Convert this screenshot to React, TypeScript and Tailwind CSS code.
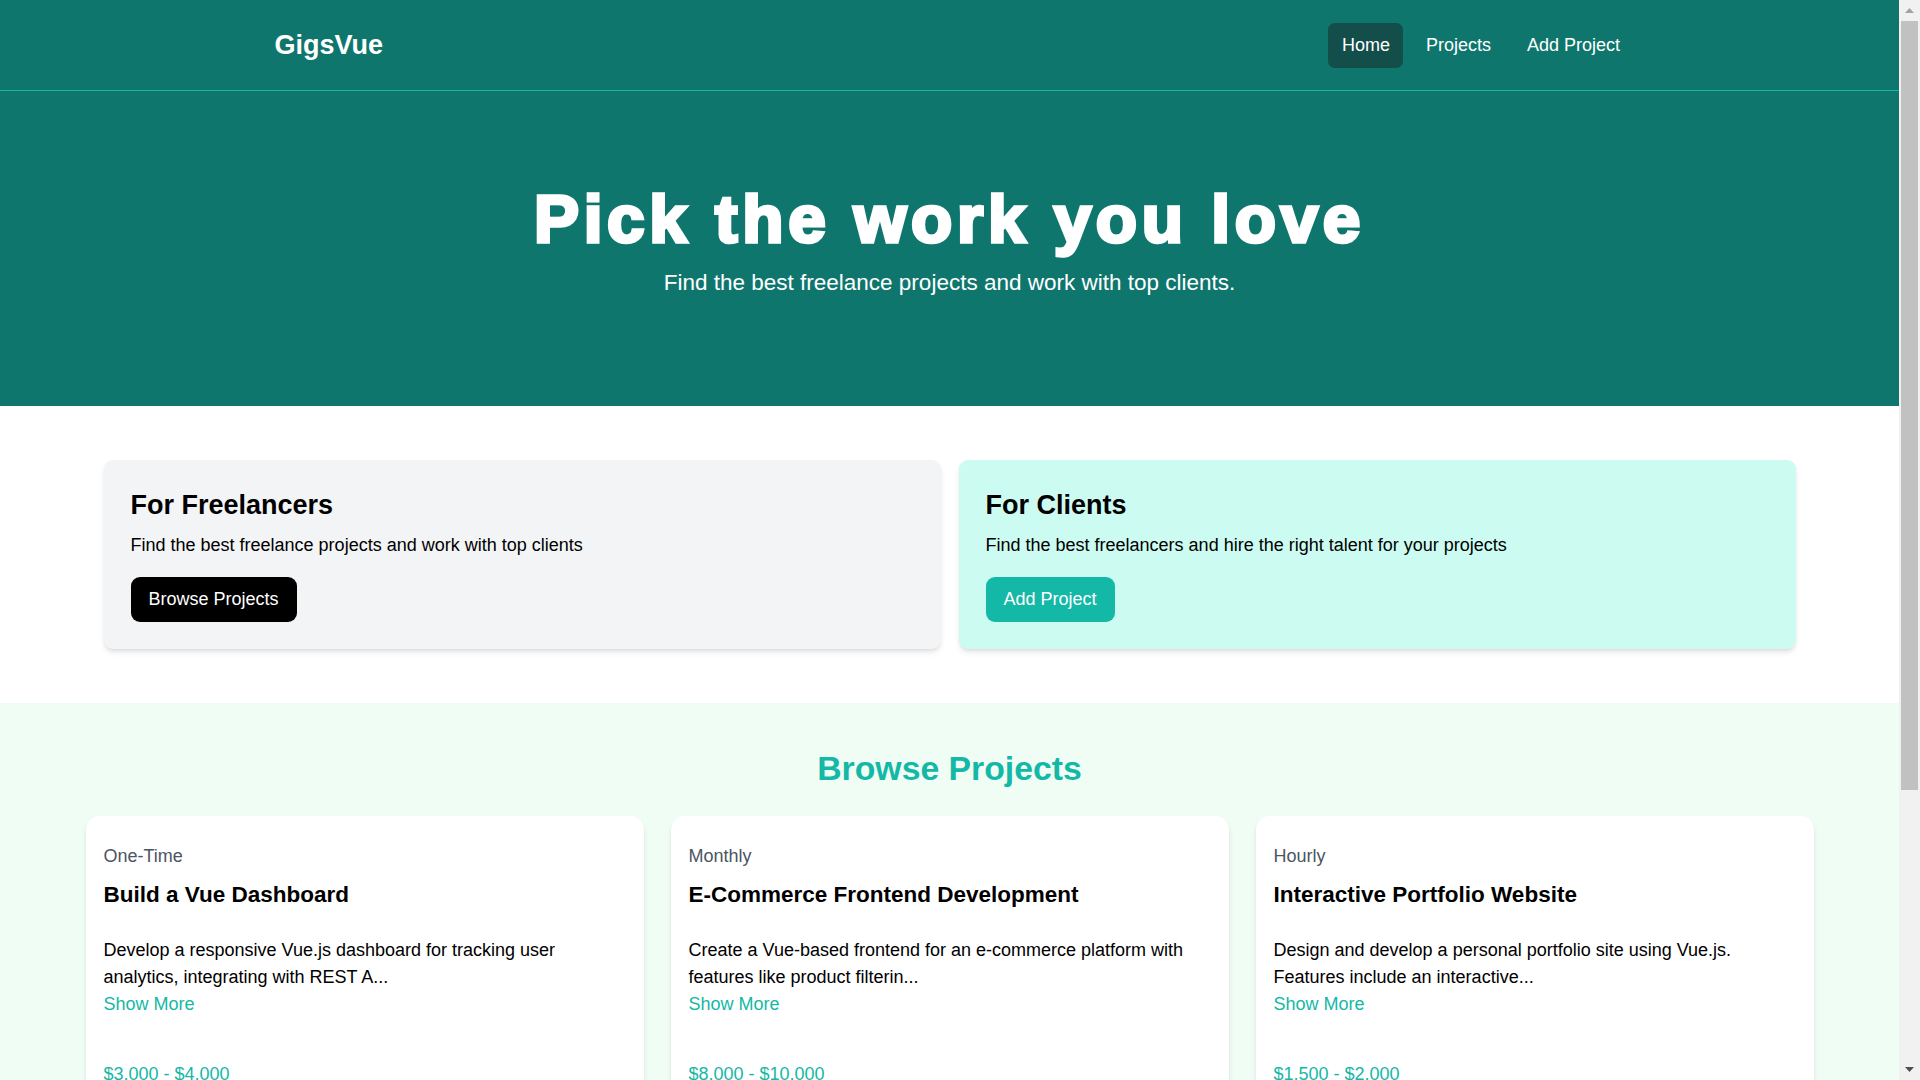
import { MapPin } from "lucide-react";

const projects = [
  {
    type: "One-Time",
    title: "Build a Vue Dashboard",
    description:
      "Develop a responsive Vue.js dashboard for tracking user analytics, integrating with REST A...",
    budget: "$3,000 - $4,000",
    location: "Remote",
  },
  {
    type: "Monthly",
    title: "E-Commerce Frontend Development",
    description:
      "Create a Vue-based frontend for an e-commerce platform with features like product filterin...",
    budget: "$8,000 - $10,000",
    location: "New York, NY",
  },
  {
    type: "Hourly",
    title: "Interactive Portfolio Website",
    description:
      "Design and develop a personal portfolio site using Vue.js. Features include an interactive...",
    budget: "$1,500 - $2,000",
    location: "Remote",
  },
];

function Navbar() {
  return (
    <nav className="bg-[#0f766e] border-b border-[#14b8a6]">
      <div className="max-w-[1440px] mx-auto px-[36px]">
        <div className="flex h-[90px] items-center justify-between">
          <a href="#" className="ml-[9px] text-white text-[27px] font-bold">
            GigsVue
          </a>
          <div className="flex gap-[9px]">
            <a href="#" className="text-white bg-[#134e4a] rounded-[6.75px] px-[13.5px] py-[9px] leading-[27px]">
              Home
            </a>
            <a href="#" className="text-white rounded-[6.75px] px-[13.5px] py-[9px] leading-[27px]">
              Projects
            </a>
            <a href="#" className="text-white rounded-[6.75px] px-[13.5px] py-[9px] leading-[27px]">
              Add Project
            </a>
          </div>
        </div>
      </div>
    </nav>
  );
}

function Hero() {
  return (
    <section className="bg-[#0f766e] py-[90px]">
      <div className="flex flex-col items-center text-center text-white">
        <h1 className="pt-[3.5px] text-[67.5px] leading-none font-bold tracking-[4.7px] [-webkit-text-stroke:3.5px_white]">
          Pick the work you love
        </h1>
        <p className="mt-[14.5px] mb-[18px] text-[22.5px] leading-[31.5px]">
          Find the best freelance projects and work with top clients.
        </p>
      </div>
    </section>
  );
}

function HomeCards() {
  return (
    <section className="py-[36px]">
      <div className="max-w-[1728px] mx-auto">
        <div className="grid grid-cols-2 gap-[18px] p-[18px]">
          <div className="bg-[#f3f4f6] p-[27px] rounded-[9px] shadow-md">
            <h2 className="text-[27px] leading-[36px] font-bold">For Freelancers</h2>
            <p className="mt-[9px] mb-[18px] leading-[27px]">
              Find the best freelance projects and work with top clients
            </p>
            <a href="#" className="inline-block bg-black text-white rounded-[9px] px-[18px] py-[9px] leading-[27px]">
              Browse Projects
            </a>
          </div>
          <div className="bg-[#ccfbf1] p-[27px] rounded-[9px] shadow-md">
            <h2 className="text-[27px] leading-[36px] font-bold">For Clients</h2>
            <p className="mt-[9px] mb-[18px] leading-[27px]">
              Find the best freelancers and hire the right talent for your projects
            </p>
            <a href="#" className="inline-block bg-[#14b8a6] text-white rounded-[9px] px-[18px] py-[9px] leading-[27px]">
              Add Project
            </a>
          </div>
        </div>
      </div>
    </section>
  );
}

function ProjectCard({ p }: { p: (typeof projects)[number] }) {
  return (
    <div className="bg-white rounded-[13.5px] shadow-md">
      <div className="p-[18px]">
        <div className="mb-[27px]">
          <div className="text-[#4b5563] my-[9px] leading-[27px]">{p.type}</div>
          <h3 className="text-[22.5px] leading-[31.5px] font-bold">{p.title}</h3>
        </div>
        <div className="mb-[22.5px] leading-[27px]">
          <div>{p.description}</div>
          <button className="text-[#14b8a6] mb-[20px] leading-[27px]">Show More</button>
        </div>
        <h3 className="text-[#14b8a6] mb-[9px] leading-[27px]">{p.budget}</h3>
        <div className="border border-[#f3f4f6] mb-[22.5px]"></div>
        <div className="flex justify-between items-center mb-[18px]">
          <div className="flex items-center gap-[6px] text-[#c2410c]">
            <MapPin className="w-[16px] h-[16px]" />
            {p.location}
          </div>
          <a href="#" className="bg-[#14b8a6] text-white px-[18px] py-[9px] rounded-[9px] text-[15.75px] leading-[22.5px]">
            Read More
          </a>
        </div>
      </div>
    </div>
  );
}

// window scrollbar as it shows in the screenshot
function Scrollbar() {
  return (
    <div className="w-[21px] shrink-0 h-screen bg-[#f1f1f1] flex flex-col">
      <div className="h-[21px] flex items-center justify-center">
        <svg width="9" height="5" viewBox="0 0 9 5">
          <polygon points="4.5,0 9,5 0,5" fill="#a3a3a3" />
        </svg>
      </div>
      <div className="h-[769px] mx-[2px] bg-[#c1c1c1]"></div>
      <div className="flex-1"></div>
      <div className="h-[21px] flex items-center justify-center">
        <svg width="9" height="5" viewBox="0 0 9 5">
          <polygon points="0,0 9,0 4.5,5" fill="#505050" />
        </svg>
      </div>
    </div>
  );
}

export default function App() {
  return (
    <div className="flex h-screen overflow-hidden bg-white text-black text-[18px] font-['Liberation_Sans',Arial,sans-serif]">
      <main className="flex-1 min-w-0 h-screen overflow-y-auto">
        <Navbar />
        <Hero />
        <HomeCards />
        <section className="bg-[#f0fdf4] px-[18px] py-[45px]">
          <div className="max-w-[1728px] mx-auto">
            <h2 className="text-[33.75px] leading-[40.5px] font-bold text-[#14b8a6] mb-[27px] text-center">
              Browse Projects
            </h2>
            <div className="grid grid-cols-3 gap-[27px]">
              {projects.map((p) => (
                <ProjectCard key={p.title} p={p} />
              ))}
            </div>
          </div>
        </section>
        <section className="mx-auto max-w-[576px] my-[45px] px-[27px]">
          <a href="#" className="block bg-black text-white text-center py-[18px] px-[27px] rounded-[13.5px]">
            View All Projects
          </a>
        </section>
      </main>
      <Scrollbar />
    </div>
  );
}
